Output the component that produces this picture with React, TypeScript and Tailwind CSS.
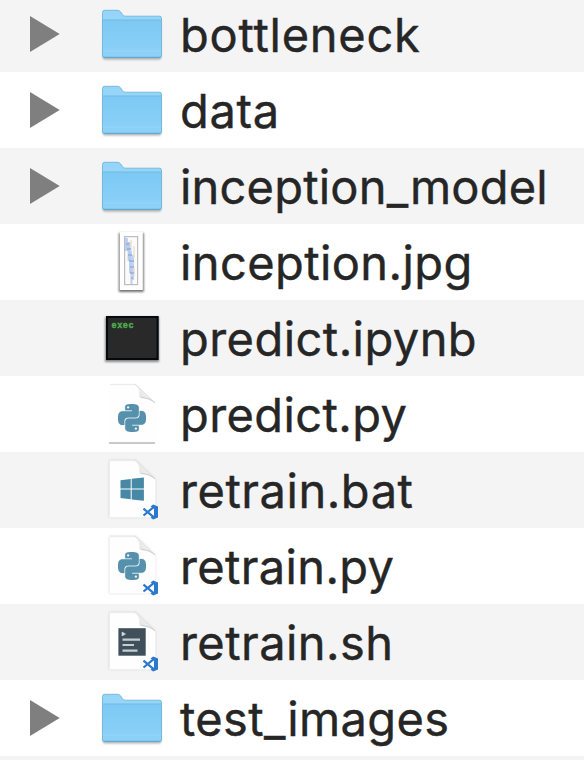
import React from "react";
import { SiPython } from "react-icons/si";

type Kind = "folder" | "image" | "exec" | "python" | "pythonCode" | "windows" | "shell";

const files: { name: string; kind: Kind; spacing: string }[] = [
  { name: "bottleneck", kind: "folder", spacing: "tracking-[0.75px]" },
  { name: "data", kind: "folder", spacing: "tracking-[0.65px]" },
  { name: "inception_model", kind: "folder", spacing: "tracking-[0.2px]" },
  { name: "inception.jpg", kind: "image", spacing: "tracking-[0.4px]" },
  { name: "predict.ipynb", kind: "exec", spacing: "tracking-[0.45px]" },
  { name: "predict.py", kind: "python", spacing: "tracking-[0.4px]" },
  { name: "retrain.bat", kind: "windows", spacing: "tracking-[0.55px]" },
  { name: "retrain.py", kind: "pythonCode", spacing: "tracking-[0.35px]" },
  { name: "retrain.sh", kind: "shell", spacing: "tracking-[0.45px]" },
  { name: "test_images", kind: "folder", spacing: "tracking-[0.35px]" },
];

function Gradients() {
  return (
    <svg className="absolute h-0 w-0">
      <defs>
        <linearGradient id="front" x1="0" y1="0" x2="0" y2="1">
          <stop offset="0" stopColor="#7cc9f4" />
          <stop offset="1" stopColor="#8dd1f9" />
        </linearGradient>
        <linearGradient id="fold" x1="0" y1="1" x2="1" y2="0">
          <stop offset="0" stopColor="#d0d0d0" />
          <stop offset="0.5" stopColor="#f0f0f0" />
          <stop offset="1" stopColor="#ffffff" />
        </linearGradient>
        <filter id="soft" x="-20%" y="-20%" width="140%" height="140%">
          <feGaussianBlur stdDeviation="1.2" />
        </filter>
      </defs>
    </svg>
  );
}

function Folder() {
  return (
    <>
      <rect x="3" y="24" width="58" height="39.5" rx="1.5" fill="#000" opacity="0.3" filter="url(#soft)" />
      <path
        d="M2.5 60V16.5Q2.5 14.3 4.7 14.3H17.5Q19.5 14.3 20.7 16L22.4 18.6Q23.5 20.2 25.5 20.2H59.5Q61.5 20.2 61.5 22.2V60Q61.5 61.6 59.9 61.6H4.1Q2.5 61.6 2.5 60Z"
        fill="#96d5f8"
        stroke="#6fb4da"
        strokeWidth="0.9"
      />
      <path d="M3 24H61V59.8Q61 61 59.8 61H4.2Q3 61 3 59.8Z" fill="url(#front)" />
      <path d="M3 24H61" stroke="#6dbbe5" strokeWidth="1" />
      <path d="M3 55H61" stroke="#9bd8f7" strokeWidth="0.8" />
      <path d="M3.5 61.3H60.5" stroke="#68a8ce" strokeWidth="1.2" />
    </>
  );
}

function Page({ line }: { line?: boolean }) {
  return (
    <>
      {!line && (
        <path d="M9 8H36L55.5 27V65.5H9Z" fill="#000" opacity="0.14" filter="url(#soft)" />
      )}
      <path d="M9.5 8H36L55.5 27V65.5H9.5Z" fill="#fefefe" />
      <path d="M10 8.5H36" stroke="#ececec" strokeWidth="1.4" />
      <path d="M35 8L55 27Q50 22.5 39.5 21.5Q40 13 35 8Z" fill="url(#fold)" />
      <path d="M35 8L55 27" stroke="#dcdcdc" strokeWidth="1" fill="none" />
      <path d="M41 21.5Q50 22 55 27" stroke="#cfcfcf" strokeWidth="1" fill="none" />
      {line && <path d="M9 67H55" stroke="#b9b9b9" strokeWidth="1.5" />}
    </>
  );
}

function CodeBadge() {
  return (
    <g fill="none" stroke="#2b78cd">
      <path d="M43.5 56.7L54 65.3M43.5 63.5L54 54.8" strokeWidth="2.2" />
      <path d="M53.2 52.5L58 54.6V65.4L53.2 67.5L50.5 65.5L54 63.8V56.2L50.5 54.5Z" fill="#2b78cd" stroke="none" />
    </g>
  );
}

function FileIcon({ kind }: { kind: Kind }) {
  return (
    <svg viewBox="0 0 64 76" className="h-[76px] w-16 shrink-0">
      {kind === "folder" && <Folder />}
      {kind === "image" && (
        <>
          <rect x="18.8" y="9" width="25" height="59" fill="#000" opacity="0.55" filter="url(#soft)" />
          <rect x="19.8" y="8" width="23" height="58" fill="#fff" />
          <rect x="24.6" y="12.6" width="13" height="48" fill="#fbfbfb" stroke="#bdbdbd" strokeWidth="1.2" />
          <path d="M26.5 14V27M29 18V37M30.5 27V49" stroke="#a9c3ec" strokeWidth="2.8" fill="none" opacity="0.8" />
          <path d="M33 31V56M31.5 46V60" stroke="#b9c8e6" strokeWidth="2.2" fill="none" opacity="0.8" />
          <path d="M31 16V27M34 22V34M34 44V52" stroke="#e5dccc" strokeWidth="1.3" fill="none" />
          <path d="M26 20H29M27 25H31M28 31H32M29 37H34M30 43H34M30 49H34M31 54H33" stroke="#8faee0" strokeWidth="1.4" fill="none" />
        </>
      )}
      {kind === "exec" && (
        <>
          <rect x="5" y="17" width="54" height="45" fill="#000" opacity="0.45" filter="url(#soft)" />
          <rect x="6" y="16" width="52.7" height="44" fill="#060a0d" />
          <rect x="8" y="18" width="48.5" height="40" fill="#292929" />
          <text x="11.5" y="27.8" fontSize="8.5" fontWeight="700" fill="#4fae50" stroke="#4fae50" strokeWidth="0.4" textLength="22" fontFamily="Liberation Mono, monospace">
            exec
          </text>
        </>
      )}
      {kind === "python" && (
        <>
          <Page line />
          <SiPython x="18" y="28" size="28" color="#5590ac" stroke="#5590ac" strokeWidth="0.2" />
        </>
      )}
      {kind === "pythonCode" && (
        <>
          <Page />
          <SiPython x="18" y="24" size="28" color="#5590ac" stroke="#5590ac" strokeWidth="0.2" />
          <CodeBadge />
        </>
      )}
      {kind === "windows" && (
        <>
          <Page />
          <path
            d="M20.5 28.2L30.7 27V36.5H20.5ZM31.7 26.8L43.9 25.6V36.5H31.7ZM20.5 37.5H30.7V47.2L20.5 46ZM31.7 37.5H43.9V48.7L31.7 47.4Z"
            fill="#4788a6"
          />
          <CodeBadge />
        </>
      )}
      {kind === "shell" && (
        <>
          <Page />
          <rect x="18.4" y="24.2" width="27.3" height="27.5" fill="#3f505a" />
          <path d="M22 28L25.5 30L22 32Z" fill="#d4dadd" stroke="#d4dadd" strokeWidth="0.6" />
          <path d="M22.5 35.7H40M22.5 41H34M22.5 46.7H37.5" stroke="#c6cdd1" strokeWidth="2.2" />
          <CodeBadge />
        </>
      )}
    </svg>
  );
}

export default function App() {
  return (
    <main className="h-[760px] w-[584px] overflow-hidden bg-[#f4f4f4] font-['Inter',sans-serif] text-[#262626]">
      <Gradients />
      <div className="-mt-1">
        {files.map((f) => (
          <div key={f.name} className="flex h-[76px] items-center odd:bg-[#f4f4f4] even:bg-white">
            <div className="flex w-[100px] shrink-0 pl-[30px]">
              {f.kind === "folder" && (
                <svg viewBox="0 0 30 36" className="h-9 w-[30px]">
                  <path d="M0 0L29.7 18L0 36Z" fill="#7f7f7f" />
                </svg>
              )}
            </div>
            <FileIcon kind={f.kind} />
            <span
              className={
                "ml-4 pt-[2px] whitespace-nowrap text-[47px] leading-[76px] [-webkit-text-stroke:0.4px_#262626] " + f.spacing
              }
            >
              {f.name}
            </span>
          </div>
        ))}
      </div>
    </main>
  );
}
